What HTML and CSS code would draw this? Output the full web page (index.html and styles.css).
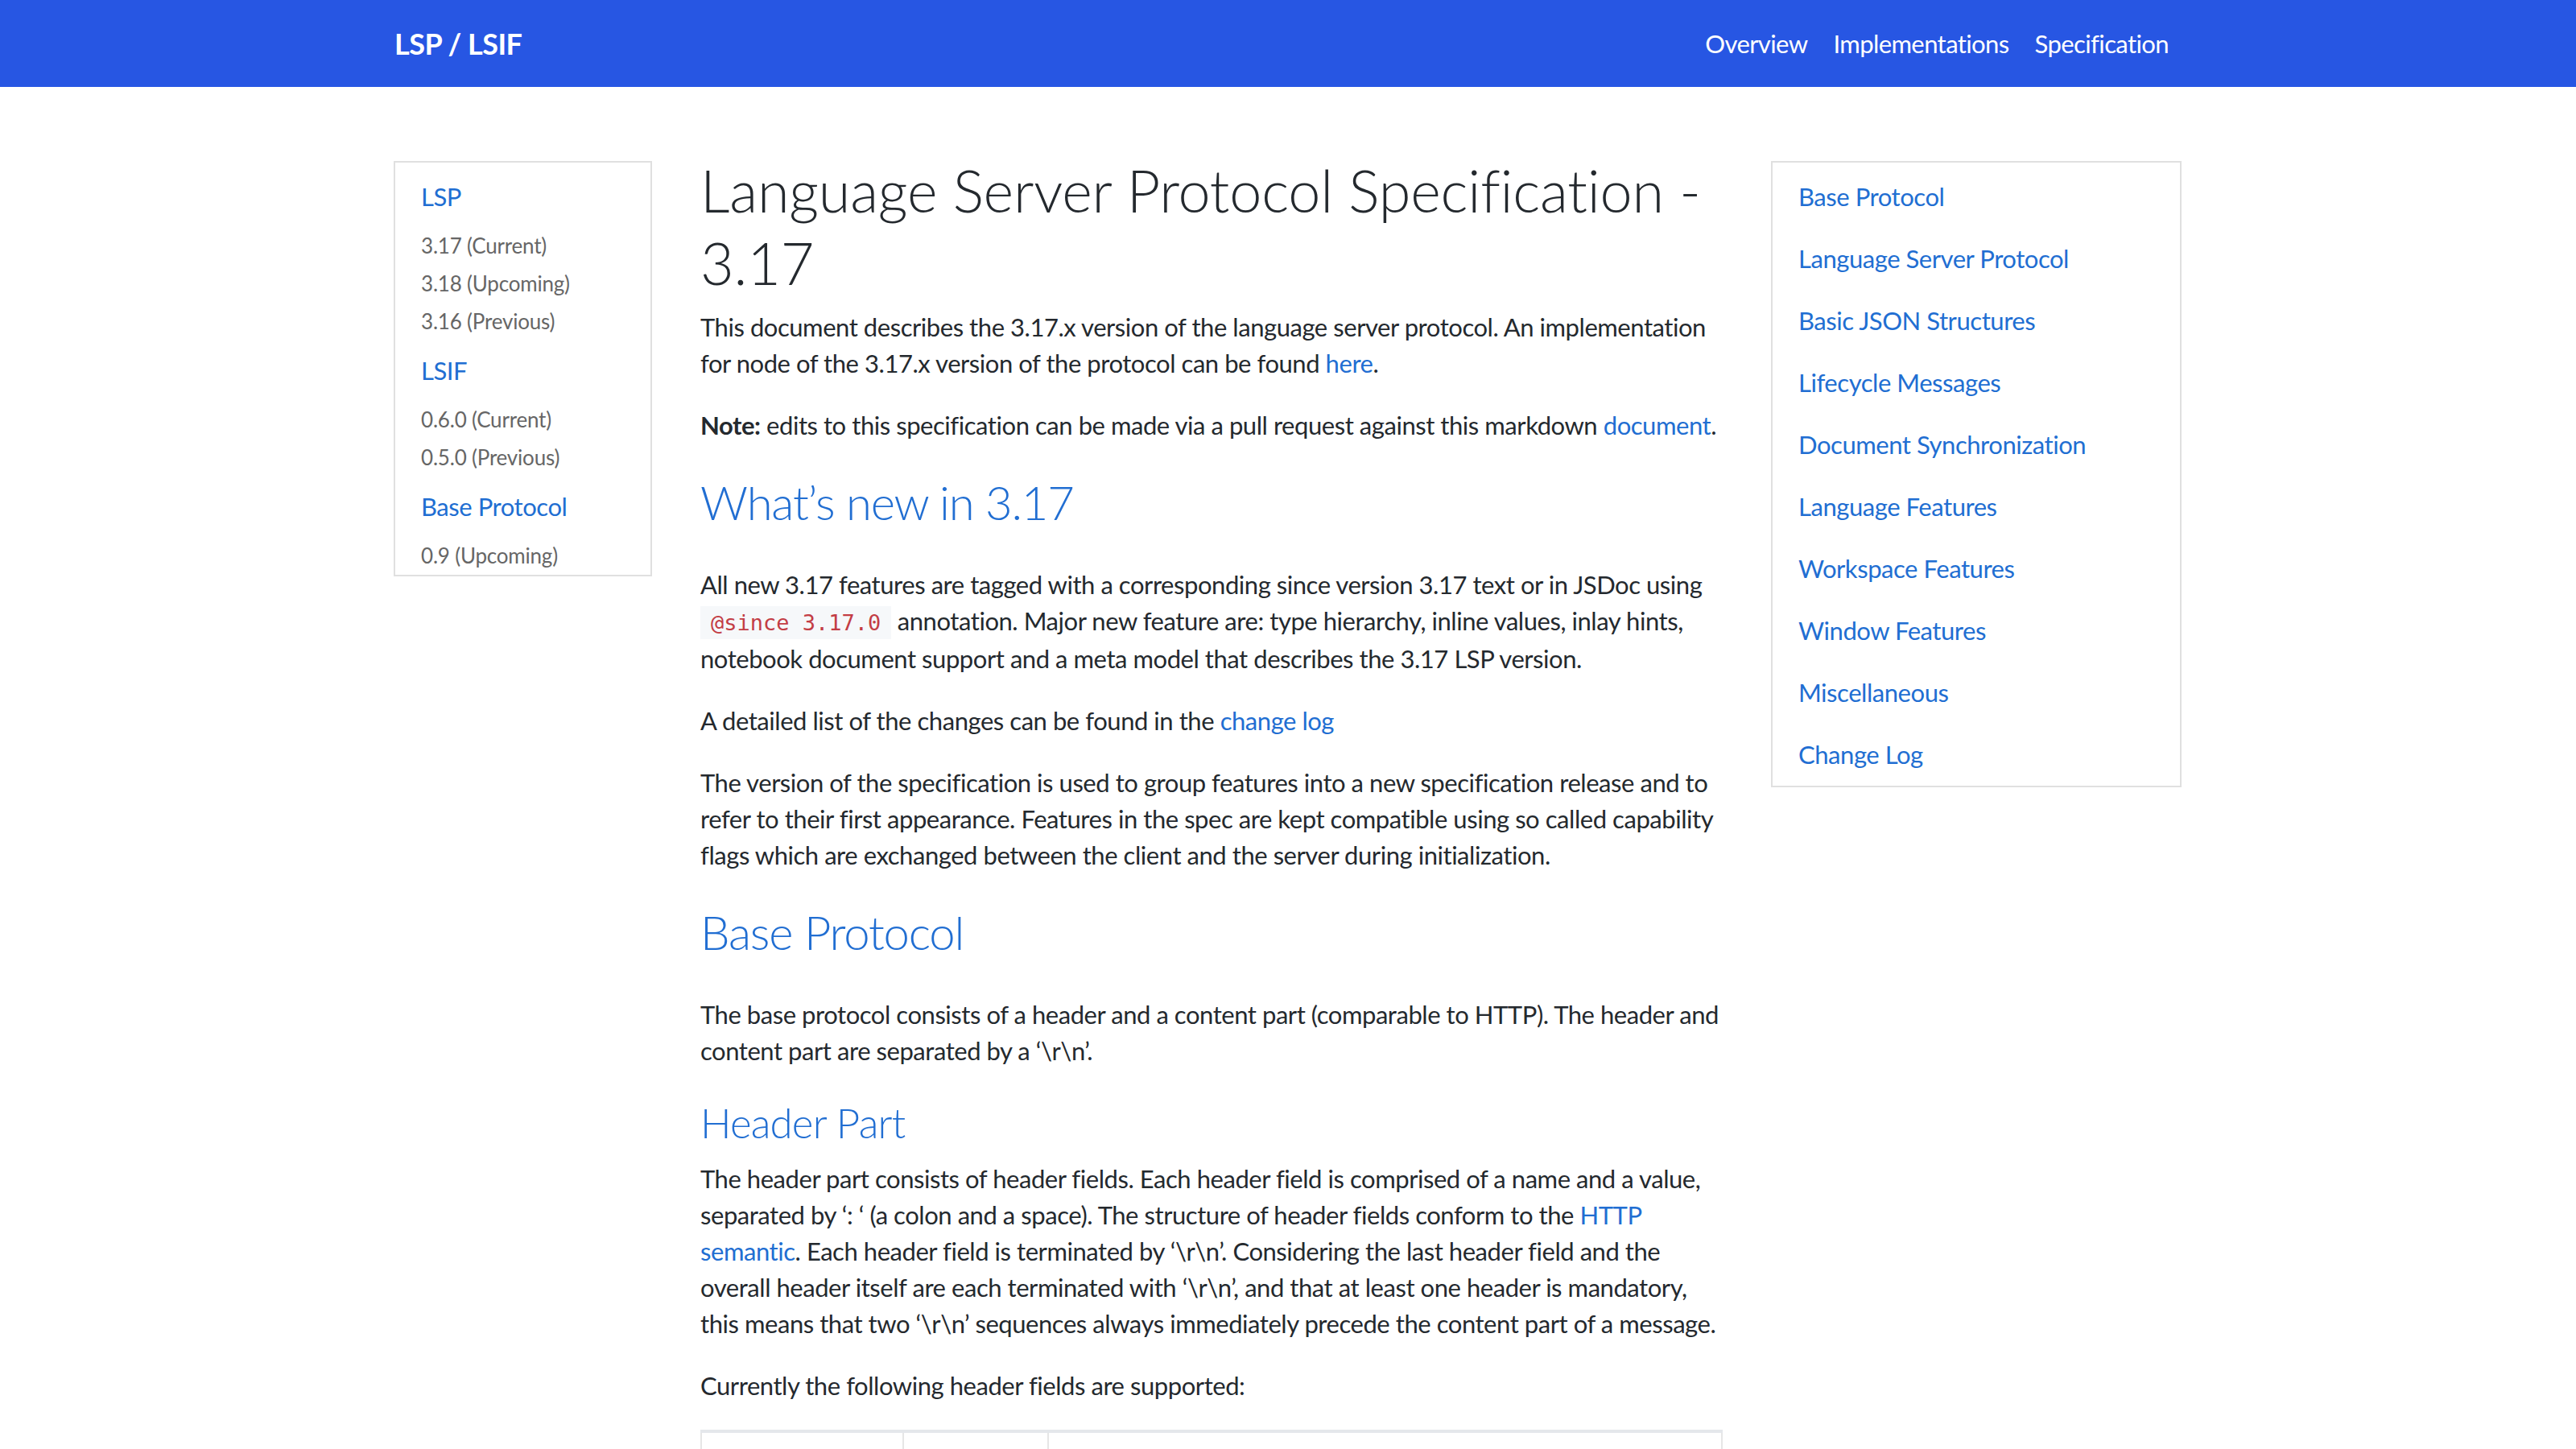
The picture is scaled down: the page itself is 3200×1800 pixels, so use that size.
FILE: index.html
```html
<!DOCTYPE html>
<html lang="en">
<head>
<meta charset="utf-8">
<title>Language Server Protocol Specification - 3.17</title>
<link rel="stylesheet" href="styles.css">
</head>
<body>
<nav class="navbar">
  <div class="container navbar-inner">
    <a class="brand" href="#">LSP / LSIF</a>
    <ul class="nav-links">
      <li><a href="#">Overview</a></li>
      <li><a href="#">Implementations</a></li>
      <li><a href="#">Specification</a></li>
    </ul>
  </div>
</nav>

<div class="container">
  <div class="layout">
    <aside class="side-nav">
      <div class="side-group">
        <a class="side-title" href="#">LSP</a>
        <ul class="side-sub">
          <li>3.17 (Current)</li>
          <li>3.18 (Upcoming)</li>
          <li>3.16 (Previous)</li>
        </ul>
      </div>
      <div class="side-group">
        <a class="side-title" href="#">LSIF</a>
        <ul class="side-sub">
          <li>0.6.0 (Current)</li>
          <li>0.5.0 (Previous)</li>
        </ul>
      </div>
      <div class="side-group">
        <a class="side-title" href="#">Base Protocol</a>
        <ul class="side-sub">
          <li>0.9 (Upcoming)</li>
        </ul>
      </div>
    </aside>

    <main class="content">
      <h1>Language Server Protocol Specification - 3.17</h1>
      <p>This document describes the 3.17.x version of the language server protocol. An implementation for node of the 3.17.x version of the protocol can be found <a href="#">here</a>.</p>
      <p><strong>Note:</strong> edits to this specification can be made via a pull request against this markdown <a href="#">document</a>.</p>

      <h2>What’s new in 3.17</h2>
      <p>All new 3.17 features are tagged with a corresponding since version 3.17 text or in JSDoc using <code>@since 3.17.0</code> annotation. Major new feature are: type hierarchy, inline values, inlay hints, notebook document support and a meta model that describes the 3.17 LSP version.</p>
      <p>A detailed list of the changes can be found in the <a href="#">change log</a></p>
      <p>The version of the specification is used to group features into a new specification release and to refer to their first appearance. Features in the spec are kept compatible using so called capability flags which are exchanged between the client and the server during initialization.</p>

      <h2>Base Protocol</h2>
      <p>The base protocol consists of a header and a content part (comparable to HTTP). The header and content part are separated by a ‘\r\n’.</p>

      <h3>Header Part</h3>
      <p>The header part consists of header fields. Each header field is comprised of a name and a value, separated by ‘: ‘ (a colon and a space). The structure of header fields conform to the <a href="#">HTTP semantic</a>. Each header field is terminated by ‘\r\n’. Considering the last header field and the overall header itself are each terminated with ‘\r\n’, and that at least one header is mandatory, this means that two ‘\r\n’ sequences always immediately precede the content part of a message.</p>
      <p>Currently the following header fields are supported:</p>

      <table class="fields">
        <thead>
          <tr><th>Header Field Name</th><th>Value Type</th><th>Description</th></tr>
        </thead>
        <tbody>
          <tr><td>Content-Length</td><td>number</td><td>The length of the content part in bytes. This header is required.</td></tr>
          <tr><td>Content-Type</td><td>string</td><td>The mime type of the content part. Defaults to application/vscode-jsonrpc; charset=utf-8</td></tr>
        </tbody>
      </table>
    </main>

    <aside class="toc">
      <ul>
        <li><a href="#">Base Protocol</a></li>
        <li><a href="#">Language Server Protocol</a></li>
        <li><a href="#">Basic JSON Structures</a></li>
        <li><a href="#">Lifecycle Messages</a></li>
        <li><a href="#">Document Synchronization</a></li>
        <li><a href="#">Language Features</a></li>
        <li><a href="#">Workspace Features</a></li>
        <li><a href="#">Window Features</a></li>
        <li><a href="#">Miscellaneous</a></li>
        <li><a href="#">Change Log</a></li>
      </ul>
    </aside>
  </div>
</div>
</body>
</html>
```

FILE: styles.css
```css
* { box-sizing: border-box; }

body {
  margin: 0;
  font-family: Lato, "Open Sans", sans-serif;
  font-size: 31px;
  line-height: 45px;
  letter-spacing: -0.45px;
  color: #24292e;
  background: #fff;
}

a { color: #216ed2; text-decoration: none; }

.container {
  width: 2220px;
  margin: 0 auto;
}

/* navbar */
.navbar {
  background: #2756e3;
  height: 108px;
}
.navbar-inner {
  height: 100%;
  display: flex;
  align-items: center;
  justify-content: space-between;
}
.brand {
  color: #fff;
  font-size: 36px;
  font-weight: 700;
  letter-spacing: -0.5px;
}
.nav-links {
  display: flex;
  list-style: none;
  margin: 0;
  padding: 0;
}
.nav-links a {
  display: block;
  color: #fff;
  padding: 0 16px;
  font-size: 31px;
  letter-spacing: -0.6px;
}

/* layout */
.layout {
  display: grid;
  grid-template-columns: 320px 1270px 510px;
  column-gap: 60px;
  align-items: start;
  margin-top: 92px;
}

/* left side nav */
.side-nav {
  border: 2px solid #e0e0e0;
  margin-left: -1px;
  padding: 20px 32px 0;
}
.side-title {
  display: block;
  font-size: 31px;
  line-height: 45px;
  margin-bottom: 15px;
}
.side-sub {
  list-style: none;
  margin: 0 0 15px;
  padding: 0;
}
.side-group:last-child .side-sub { margin-bottom: 0; }
.side-sub li {
  font-size: 26px;
  line-height: 47px;
  color: #666;
  letter-spacing: -0.2px;
}

/* right toc */
.toc {
  border: 2px solid #e0e0e0;
  padding: 4px 32px 0;
}
.toc ul {
  list-style: none;
  margin: 0;
  padding: 0;
}
.toc a {
  display: block;
  padding: 16px 0;
  line-height: 45px;
}

/* main content */
.content h1 {
  font-size: 72px;
  font-weight: 300;
  line-height: 90px;
  letter-spacing: -0.2px;
  margin: -9px 0 13px;
  color: #24292e;
}
.content h2 {
  font-size: 58px;
  font-weight: 300;
  line-height: 77px;
  letter-spacing: -1.2px;
  color: #216ed2;
  margin: 34px 0 42px;
}
.content h3 {
  font-size: 51px;
  font-weight: 300;
  line-height: 67px;
  letter-spacing: -0.8px;
  color: #216ed2;
  margin: 33px 0 14px;
}
.content p {
  margin: 0 0 32px;
}
.content strong { font-weight: 700; }

code {
  font-family: "DejaVu Sans Mono", "Liberation Mono", monospace;
  font-size: 27px;
  letter-spacing: 0;
  color: #c33d45;
  background: #f6f8fa;
  padding: 5px 13px;
}

/* table */
.fields {
  width: 100%;
  border-collapse: collapse;
  margin-top: 32px;
  border-top: 4px solid #e4e7eb;
}
.fields th,
.fields td {
  border: 2px solid #e6e6e6;
  padding: 24px;
  text-align: left;
  vertical-align: top;
}
.fields th:nth-child(1) { width: 251px; }
.fields th:nth-child(2) { width: 180px; }
```
